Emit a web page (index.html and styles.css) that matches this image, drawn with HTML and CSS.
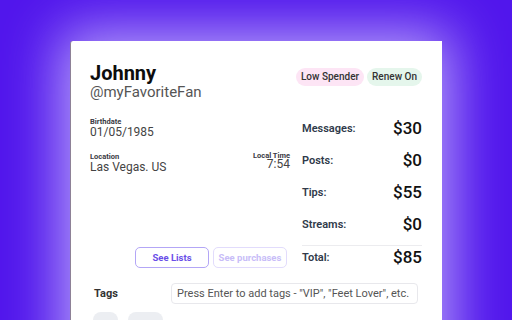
FILE: index.html
```html
<!DOCTYPE html>
<html>
<head>
  <title>Fan Profile</title>
  <link rel="stylesheet" href="styles.css">
</head>
<body>
  <div class="card">
    <div class="header">
      <div class="identity">
        <h1>Johnny</h1>
        <div class="handle">@myFavoriteFan</div>
      </div>
      <div class="badges">
        <span class="badge spender">Low Spender</span>
        <span class="badge renew">Renew On</span>
      </div>
    </div>

    <div class="details">
      <div class="info">
        <div class="field">
          <div class="label">Birthdate</div>
          <div class="value">01/05/1985</div>
        </div>
        <div class="field-row">
          <div class="field">
            <div class="label">Location</div>
            <div class="value">Las Vegas. US</div>
          </div>
          <div class="field local-time">
            <div class="label">Local Time</div>
            <div class="value">7:54</div>
          </div>
        </div>
        <div class="buttons">
          <button class="btn">See Lists</button>
          <button class="btn disabled">See purchases</button>
        </div>
      </div>

      <div class="stats">
        <div class="stat"><span class="stat-label">Messages:</span><span class="stat-value">$30</span></div>
        <div class="stat"><span class="stat-label">Posts:</span><span class="stat-value">$0</span></div>
        <div class="stat"><span class="stat-label">Tips:</span><span class="stat-value">$55</span></div>
        <div class="stat"><span class="stat-label">Streams:</span><span class="stat-value">$0</span></div>
        <div class="stat total"><span class="stat-label">Total:</span><span class="stat-value">$85</span></div>
      </div>
    </div>

    <div class="tags">
      <span class="tags-title">Tags</span>
      <input class="tag-input" type="text" placeholder="Press Enter to add tags - &quot;VIP&quot;, &quot;Feet Lover&quot;, etc.">
    </div>

    <div class="chips">
      <span class="chip short"></span>
      <span class="chip long"></span>
    </div>
  </div>
</body>
</html>
```

FILE: styles.css
```css
:root {
  --accent: #6a4ee8;
  --text-color: #111;
  --muted: #4a4a4a;
  --label: #2f3a4a;
  --border-color: #e6e6ea;
}

html, body {
  height: 100%;
}

body {
  margin: 0;
  overflow: hidden;
  font-family: Roboto, "Liberation Sans", Arial, sans-serif;
  background: #5116ec;
  color: var(--text-color);
}

.card {
  box-sizing: border-box;
  margin: 41px 70px 0;
  width: 372px;
  height: 400px;
  padding: 20px 20px 0 19px;
  background: #fff;
  border-left: 1px solid #8d8196;
  border-top-left-radius: 3px;
  box-shadow: 0 0 55px 10px #b7a2fa;
}

.header {
  display: flex;
  justify-content: space-between;
  align-items: flex-start;
}

.header h1 {
  margin: 0;
  font-size: 20px;
  line-height: 24px;
  font-weight: 700;
  color: #0d0d0d;
}

.handle {
  margin-top: -2px;
  font-size: 15px;
  line-height: 18px;
  color: #555;
}

.badges {
  display: flex;
  gap: 3px;
  margin-top: 7px;
}

.badge {
  padding: 0 5px;
  height: 18px;
  line-height: 18px;
  border-radius: 9px;
  font-size: 10px;
  font-weight: 500;
  color: #333;
}

.badge.spender {
  background: #fde5f5;
}

.badge.renew {
  background: #e5f6ec;
}

.details {
  display: grid;
  grid-template-columns: 200px 120px;
  column-gap: 12px;
  margin-top: 11px;
}

.info {
  display: flex;
  flex-direction: column;
  padding-top: 5px;
}

.field-row {
  display: flex;
  justify-content: space-between;
  margin-top: 13px;
}

.label {
  font-size: 7.5px;
  line-height: 9px;
  font-weight: 700;
  color: #3a3a44;
}

.value {
  font-size: 12px;
  line-height: 13px;
  color: #444;
}

.local-time {
  text-align: right;
  margin-top: -1px;
}

.local-time .value {
  margin-top: -2px;
}

.buttons {
  display: flex;
  justify-content: flex-end;
  gap: 4px;
  margin-top: auto;
  margin-right: 3px;
}

.btn {
  width: 74px;
  height: 21px;
  padding: 0;
  background: #fff;
  border: 1px solid #b3a6f6;
  border-radius: 5px;
  font-family: inherit;
  font-size: 9.5px;
  font-weight: 700;
  color: var(--accent);
  cursor: pointer;
}

.btn.disabled {
  border-color: #e2dcfc;
  color: #c8bdf8;
}

.stat {
  display: flex;
  justify-content: space-between;
  align-items: center;
  height: 32px;
}

.stat-label {
  font-size: 11px;
  font-weight: 600;
  color: var(--label);
}

.stat-value {
  font-size: 17px;
  font-weight: 500;
  color: var(--text-color);
}

.stat.total {
  margin-top: 5px;
  height: 22px;
  border-top: 1px solid #ececef;
}

.tags {
  display: flex;
  align-items: center;
  margin-top: 15px;
}

.tags-title {
  width: 77px;
  padding-left: 4px;
  font-size: 11px;
  font-weight: 700;
  color: #333;
}

.tag-input {
  width: 247px;
  height: 21px;
  padding: 0 5px;
  box-sizing: border-box;
  border: 1px solid #e8e8ec;
  border-radius: 4px;
  font-family: inherit;
  font-size: 11px;
  color: #444;
}

.tag-input::placeholder {
  color: #555;
}

.chips {
  display: flex;
  gap: 10px;
  margin-top: 8px;
  padding-left: 3px;
}

.chip {
  height: 16px;
  border-radius: 8px;
  background: #eceef2;
}

.chip.short {
  width: 25px;
}

.chip.long {
  width: 35px;
}
```
